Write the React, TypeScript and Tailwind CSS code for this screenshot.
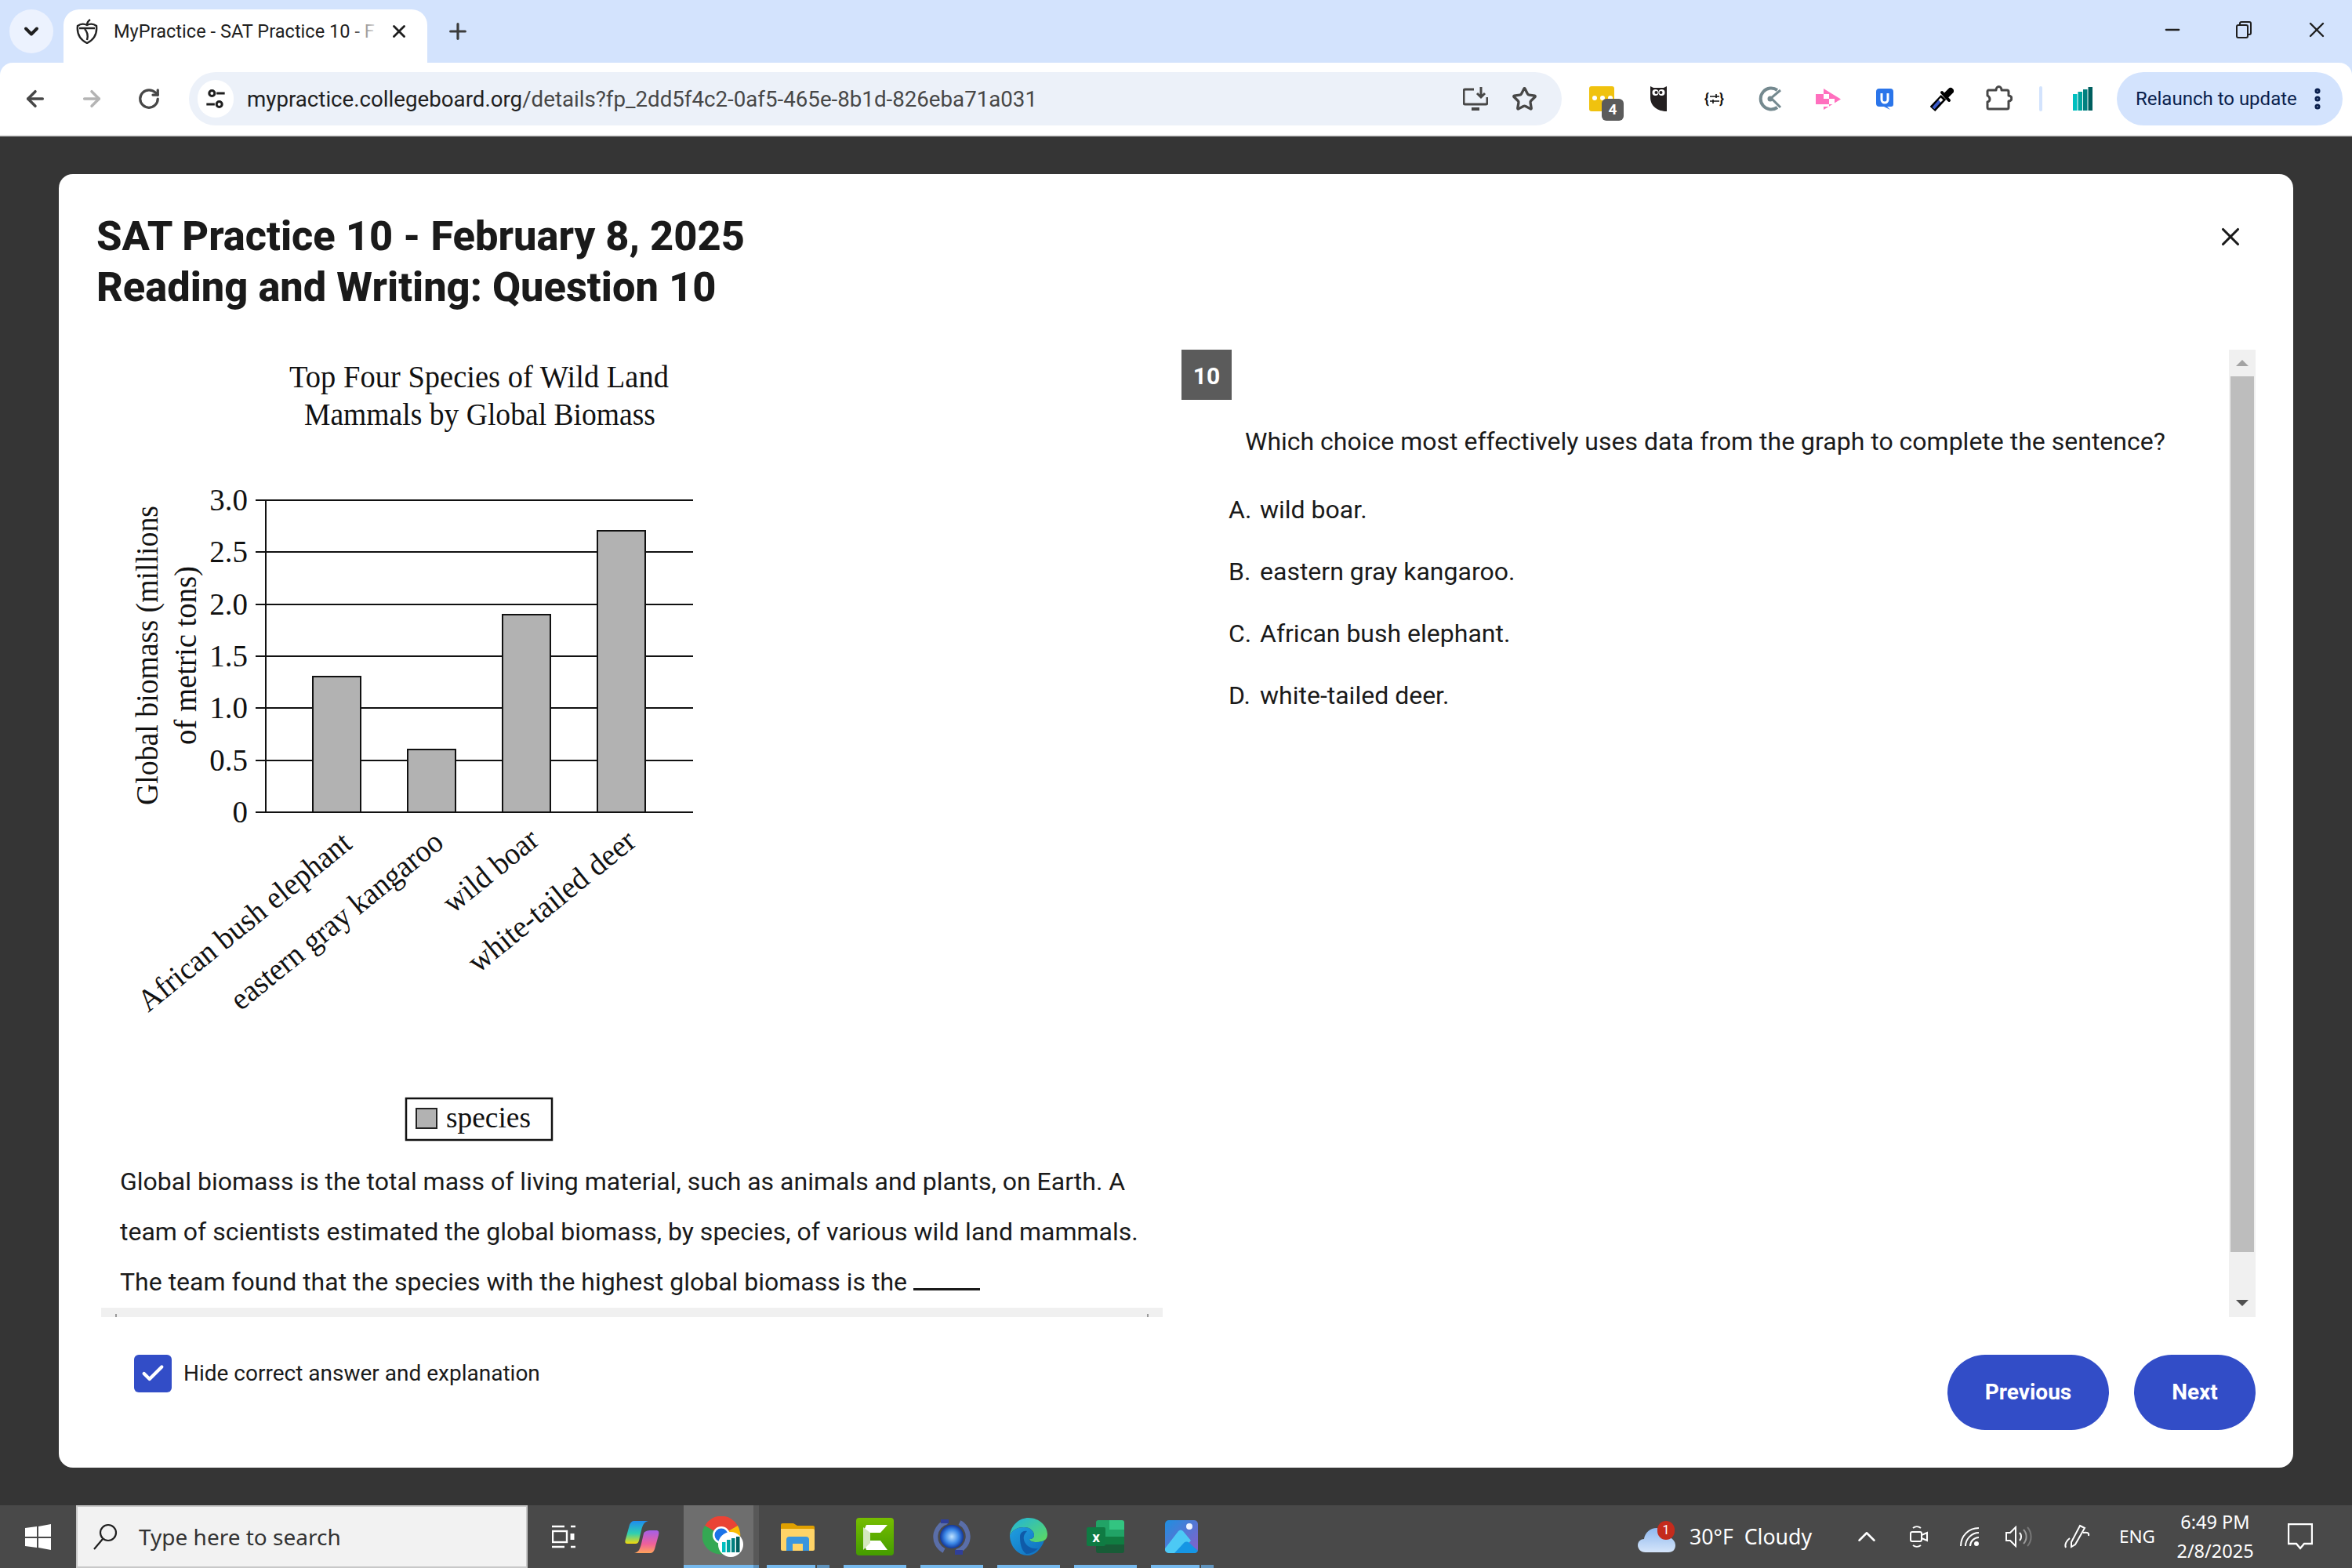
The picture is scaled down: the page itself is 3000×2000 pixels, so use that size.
import { ArrowLeft, ArrowRight, Check, ChevronDown, ChevronUp, EllipsisVertical, Minus, Plus, RotateCw, Star, X } from "lucide-react";

const ui = "font-['Noto_Sans',sans-serif]";
const serif = "'Liberation Serif', serif";

const ticks = [
    { label: "3.0", y: 638 },
    { label: "2.5", y: 704 },
    { label: "2.0", y: 771 },
    { label: "1.5", y: 837 },
    { label: "1.0", y: 903 },
    { label: "0.5", y: 970 },
    { label: "0", y: 1036 },
];

const bars = [
    { x: 399, top: 863 },
    { x: 520, top: 956 },
    { x: 641, top: 784 },
    { x: 762, top: 677 },
];

const barLabels = [
    { text: "African bush elephant", x: 189, y: 1292, len: 337 },
    { text: "eastern gray kangaroo", x: 307, y: 1290, len: 336 },
    { text: "wild boar", x: 578, y: 1166, len: 144 },
    { text: "white-tailed deer", x: 610, y: 1242, len: 262 },
];

const options = [
    { letter: "A.", text: "wild boar." },
    { letter: "B.", text: "eastern gray kangaroo." },
    { letter: "C.", text: "African bush elephant." },
    { letter: "D.", text: "white-tailed deer." },
];

const Chart = () => (
    <svg viewBox="129 446 800 1029" className="w-[800px] h-[1029px] shrink-0" fontFamily={serif} fill="#111">
        <text x="369" y="494" fontSize="39" textLength="484" lengthAdjust="spacingAndGlyphs">Top Four Species of Wild Land</text>
        <text x="388" y="542" fontSize="39" textLength="448" lengthAdjust="spacingAndGlyphs">Mammals by Global Biomass</text>
        {ticks.map((t) => (
            <g key={t.label}>
                <line x1="326" x2="884" y1={t.y} y2={t.y} stroke="#111" strokeWidth="2" />
                <text x="316" y={t.y + 13} fontSize="39" textAnchor="end">{t.label}</text>
            </g>
        ))}
        <line x1="339" x2="339" y1="638" y2="1036" stroke="#111" strokeWidth="2" />
        {bars.map((b) => (
            <rect key={b.x} x={b.x} y={b.top} width="61" height={1036 - b.top} fill="#b2b2b2" stroke="#111" strokeWidth="2" />
        ))}
        <text transform="translate(201 1027) rotate(-90)" fontSize="39" textLength="382" lengthAdjust="spacingAndGlyphs">Global biomass (millions</text>
        <text transform="translate(250 950) rotate(-90)" fontSize="39" textLength="228" lengthAdjust="spacingAndGlyphs">of metric tons)</text>
        {barLabels.map((l) => (
            <text key={l.text} transform={`translate(${l.x} ${l.y}) rotate(-39)`} fontSize="40" textLength={l.len} lengthAdjust="spacingAndGlyphs">{l.text}</text>
        ))}
        <rect x="518" y="1401" width="186" height="53" fill="#fff" stroke="#111" strokeWidth="2.5" />
        <rect x="531" y="1414" width="26" height="25" fill="#b2b2b2" stroke="#222" strokeWidth="2" />
        <text x="569" y="1438" fontSize="37" textLength="108" lengthAdjust="spacingAndGlyphs">species</text>
    </svg>
);

const TabStrip = () => (
    <div className="h-[80px] flex items-start pt-[12px] relative">
        <div className="ml-[12px] w-[56px] h-[56px] rounded-full bg-[#ecf2fe] flex items-center justify-center">
            <ChevronDown size={28} strokeWidth={3.4} color="#1f1f1f" />
        </div>
        <div className="ml-[13px] w-[464px] h-[68px] bg-white rounded-t-[20px] flex items-center relative pb-[12px]">
            <svg viewBox="0 0 30 32" className="ml-[15px] w-[30px] h-[32px]" fill="none" stroke="#222" strokeWidth="2.4">
                <path d="M3 9c4-3 8-3 12-1 4-2 8-2 12 1 1 9-2 17-12 22C5 26 2 18 3 9z" />
                <path d="M5 12h20M15 8c0-3 1-5 4-7" />
                <path d="M12 13c3 3 5 7 3 14" />
            </svg>
            <span className="ml-[19px] w-[351px] overflow-hidden whitespace-nowrap text-[23.6px] text-[#1f1f1f] font-['Roboto',sans-serif] leading-[28px]">MyPractice - SAT Practice 10 - F</span>
            <div className="absolute left-[365px] top-0 w-[38px] h-[56px] bg-gradient-to-r from-transparent to-white" />
            <X size={26} strokeWidth={2.6} color="#1f1f1f" />
        </div>
        <Plus size={32} strokeWidth={2.4} color="#3c3c3c" className="ml-[23px] mt-[12px]" />
        <div className="ml-auto flex items-center mt-[10px]">
            <Minus size={28} strokeWidth={2} color="#1f1f1f" className="mr-[67px]" />
            <svg viewBox="0 0 20 22" className="w-[20px] h-[22px] mr-[67px]" fill="none" stroke="#1f1f1f" strokeWidth="2">
                <rect x="1" y="5" width="14" height="16" rx="2" />
                <path d="M5 5V3a2 2 0 0 1 2-2h10a2 2 0 0 1 2 2v12a2 2 0 0 1-2 2h-2" />
            </svg>
            <X size={32} strokeWidth={1.8} color="#1f1f1f" className="mr-[29px]" />
        </div>
    </div>
);

const Toolbar = () => (
    <div className="h-[92px] bg-white rounded-t-[16px] flex items-center pl-[29px] relative">
        <ArrowLeft size={32} strokeWidth={2.6} color="#474747" />
        <ArrowRight size={32} strokeWidth={2.6} color="#b4b4b4" className="ml-[40px]" />
        <RotateCw size={30} strokeWidth={2.6} color="#474747" className="ml-[42px]" />
        <div className="ml-[36px] w-[1751px] h-[68px] rounded-full bg-[#ecf1f9] flex items-center pl-[11px]">
            <div className="w-[46px] h-[48px] rounded-full bg-white flex items-center justify-center">
                <svg viewBox="0 0 24 24" className="w-[28px] h-[28px]" fill="none" stroke="#1f1f1f" strokeWidth="2.6">
                    <circle cx="8" cy="6" r="3" />
                    <path d="M13 6h9M2 18h9" />
                    <circle cx="16" cy="18" r="3" />
                </svg>
            </div>
            <span className="ml-[17px] pt-[2px] text-[27.7px] text-[#1f1f1f] font-['Roboto',sans-serif] whitespace-nowrap">mypractice.collegeboard.org<span className="text-[#474747]">/details?fp_2dd5f4c2-0af5-465e-8b1d-826eba71a031</span></span>
            <svg viewBox="0 0 32 30" className="ml-auto w-[32px] h-[30px]" fill="none" stroke="#474747" strokeWidth="3">
                <path d="M14 3H3a2 2 0 0 0-2 2v15a2 2 0 0 0 2 2h26a2 2 0 0 0 2-2v-7" />
                <path d="M23 0v12M18 8l5 5 5-5" />
                <path d="M11 28h10" strokeWidth="4" />
            </svg>
            <Star size={33} strokeWidth={2.4} color="#474747" className="ml-[30px] mr-[31px]" />
        </div>
        <div className="ml-[35px] relative w-[32px] h-[32px] bg-[#f0c20e] rounded-[3px]">
            <div className="absolute left-[4px] top-[12px] flex gap-[4px]">
                <div className="w-[6px] h-[6px] rounded-full bg-white" />
                <div className="w-[6px] h-[6px] rounded-full bg-white" />
                <div className="w-[6px] h-[6px] rounded-full bg-white" />
            </div>
            <div className="absolute left-[16px] top-[16px] w-[28px] h-[28px] rounded-[6px] bg-[#5b5b5b] text-white text-[19px] font-bold font-['Roboto',sans-serif] flex items-center justify-center">4</div>
        </div>
        <svg viewBox="0 0 21 32" className="ml-[46px] w-[21px] h-[32px]">
            <path d="M0 0l4 2h13l4-2v32C10 32 0 26 0 14z" fill="#231f20" />
            <circle cx="6.5" cy="8" r="4" fill="#fff" />
            <circle cx="14.5" cy="8" r="4" fill="#fff" />
            <circle cx="7.5" cy="8" r="2" fill="#231f20" />
            <circle cx="13.5" cy="8" r="2" fill="#231f20" />
        </svg>
        <div className="ml-[48px] w-[25px] flex items-center justify-between text-[#111] text-[18px] font-bold font-['Roboto',sans-serif] leading-none">
            <span>{"{"}</span>
            <svg viewBox="0 0 12 12" className="w-[12px] h-[12px]" stroke="#111" strokeWidth="1.6">
                <path d="M0 3h12M0 9h12M8 0v5M4 7v5" />
            </svg>
            <span>{"}"}</span>
        </div>
        <svg viewBox="0 0 30 32" className="ml-[44px] w-[30px] h-[32px]" fill="none" stroke="#74898f" strokeWidth="4">
            <path d="M24 5A13.500 13.500 0 1 0 24 27" />
            <path d="M28 5L16 15 28 27" strokeWidth="3" />
            <circle cx="15" cy="16" r="1.500" fill="#74898f" />
        </svg>
        <svg viewBox="0 0 32 27" className="ml-[43px] w-[32px] h-[27px]">
            <path d="M10 0l22 13.500L10 27z" fill="#ff6fbe" />
            <rect x="0" y="7" width="10" height="13" fill="#ff6fbe" />
            <path d="M10 7h7v6h-7zM17 13h7v7h-7zM10 20h7v3h-7z" fill="#fff" />
        </svg>
        <svg viewBox="0 0 22 27" className="ml-[45px] w-[22px] h-[27px]">
            <path d="M4 0h14a4 4 0 0 1 4 4v16a3 3 0 0 1-3 3h-5l4 4-8-4H4a4 4 0 0 1-4-4V4a4 4 0 0 1 4-4z" fill="#2b75ea" />
            <path d="M7 6v8a4 4 0 0 0 8 0V6" fill="none" stroke="#fff" strokeWidth="3" />
        </svg>
        <svg viewBox="0 0 30 32" className="ml-[47px] w-[30px] h-[32px]" fill="none">
            <path d="M3 29L17 14" stroke="#000" strokeWidth="9" />
            <path d="M4 28L12 19" stroke="#3b5bc9" strokeWidth="4" />
            <path d="M12 19l3-3" stroke="#fff" strokeWidth="4" />
            <path d="M15 8l9 10" stroke="#000" strokeWidth="4" strokeLinecap="round" />
            <path d="M21 11l5-5" stroke="#000" strokeWidth="8" strokeLinecap="round" />
        </svg>
        <svg viewBox="0 0 34 33" className="ml-[41px] mb-[3px] w-[34px] h-[33px]" fill="none" stroke="#474747" strokeWidth="3" strokeLinejoin="round">
            <path d="M3 7h10c0-6 7-6 7 0h7a2 2 0 0 1 2 2v5c5 0 5 7 0 7v8a2 2 0 0 1-2 2H4a2 2 0 0 1-2-2v-7c4-1 4-6 0-8V9a2 2 0 0 1 1-2z" />
        </svg>
        <div className="ml-[34px] w-[4px] h-[32px] rounded-full bg-[#d3e3fd]" />
        <svg viewBox="0 0 25 30" className="ml-[39px] w-[25px] h-[30px]">
            <rect x="0" y="9" width="5.500" height="21" fill="#00c0c0" />
            <rect x="6.500" y="6" width="5.500" height="24" fill="#00a39f" />
            <rect x="13" y="3" width="5.500" height="27" fill="#008080" />
            <rect x="19.500" y="0" width="5.500" height="30" fill="#005f5f" />
        </svg>
        <div className="ml-[31px] w-[288px] h-[68px] rounded-full bg-[#d3e3fd] flex items-center pl-[24px]">
            <span className="text-[24px] text-[#0a1f4d] font-['Roboto',sans-serif] whitespace-nowrap">Relaunch to update</span>
            <EllipsisVertical size={34} strokeWidth={3} color="#0a1f4d" className="ml-[9px]" />
        </div>
    </div>
);

const Modal = () => (
    <div className="w-[2850px] h-[1650px] bg-white rounded-[18px] flex flex-col relative">
        <h1 className="pl-[48px] pt-[47px] h-[176px] text-[52.4px] leading-[65px] font-extrabold text-[#1a1a1a] font-['Roboto',sans-serif]">
            SAT Practice 10 - February 8, 2025<br />Reading and Writing: Question 10
        </h1>
        <X size={38} strokeWidth={2} color="#1a1a1a" className="absolute left-[2751px] top-[61px]" />
        <div className="mt-[48px] pl-[54px] pr-[48px] h-[1234px] flex font-['Roboto',sans-serif] text-[#1a1a1a]">
            <div className="w-[1354px] h-full flex flex-col">
                <div className="flex-1 overflow-hidden">
                    <Chart />
                    <p className="pl-[24px] text-[32px] leading-[64px] whitespace-nowrap">
                        Global biomass is the total mass of living material, such as animals and plants, on Earth. A<br />
                        team of scientists estimated the global biomass, by species, of various wild land mammals.<br />
                        The team found that the species with the highest global biomass is the <span className="inline-block w-[85px] border-b-[3px] border-[#1a1a1a]" />
                    </p>
                </div>
                <div className="h-[12px] bg-[#f0f0f0] flex items-end justify-between px-[18px]">
                    <div className="w-[2px] h-[4px] bg-[#9a9a9a]" />
                    <div className="w-[2px] h-[4px] bg-[#9a9a9a]" />
                </div>
            </div>
            <div className="ml-[24px] flex-1 flex justify-between">
                <div>
                    <div className="w-[64px] h-[64px] pt-[3px] bg-[#5b5b5b] text-white text-[30px] font-bold flex items-center justify-center">10</div>
                    <p className="mt-[29px] ml-[81px] text-[32px] leading-[48px] whitespace-nowrap">Which choice most effectively uses data from the graph to complete the sentence?</p>
                    <ul className="mt-[39px] ml-[60px] flex flex-col gap-[31px] text-[32px] leading-[48px]">
                        {options.map((o) => (
                            <li key={o.letter} className="flex">
                                <span className="w-[40px]">{o.letter}</span>
                                <span>{o.text}</span>
                            </li>
                        ))}
                    </ul>
                </div>
                <div className="w-[34px] h-full bg-[#f0f0f0] flex flex-col items-center">
                    <div className="h-[34px] flex items-center">
                        <div className="w-0 h-0 border-x-[8px] border-x-transparent border-b-[8px] border-b-[#a3a3a3]" />
                    </div>
                    <div className="w-[30px] h-[1117px] bg-[#bdbdbd]" />
                    <div className="flex-1 flex items-end pb-[14px]">
                        <div className="w-0 h-0 border-x-[8px] border-x-transparent border-t-[8px] border-t-[#505050]" />
                    </div>
                </div>
            </div>
        </div>
        <div className="pt-[48px] pl-[96px] pr-[48px] flex items-start justify-between font-['Roboto',sans-serif]">
            <label className="flex items-center text-[#1a1a1a] text-[28px]">
                <span className="w-[48px] h-[48px] rounded-[6px] bg-[#324dc7] flex items-center justify-center">
                    <Check size={34} strokeWidth={3} color="#fff" />
                </span>
                <span className="ml-[15px]">Hide correct answer and explanation</span>
            </label>
            <div className="flex gap-[32px]">
                <button className="w-[206px] h-[96px] rounded-full bg-[#324dc7] text-white text-[28px] font-bold">Previous</button>
                <button className="w-[155px] h-[96px] rounded-full bg-[#324dc7] text-white text-[28px] font-bold">Next</button>
            </div>
        </div>
    </div>
);

const Tile = ({ children, dim = false }: { children: React.ReactNode; dim?: boolean }) => (
    <div className="w-[80px] h-full flex items-center justify-center relative">
        {children}
        <div className={dim ? "absolute left-0 bottom-0 w-[62px] h-[4px] bg-[#76b9ed]" : "absolute left-0 bottom-0 w-full h-[4px] bg-[#76b9ed]"} />
        {dim && <div className="absolute left-[64px] bottom-0 w-[16px] h-[4px] bg-[#5f93bd]" />}
    </div>
);

const Taskbar = () => (
    <div className={`h-[80px] bg-[#494949] flex items-stretch ${ui}`}>
        <div className="w-[97px] flex items-center justify-center">
            <svg viewBox="0 0 33 33" className="w-[33px] h-[33px]" fill="#fff">
                <path d="M0 5l15-2v13H0zM17 3l16-3v16H17zM0 18h15v12L0 28zM17 18h16v15l-16-3z" />
            </svg>
        </div>
        <div className="w-[576px] bg-[#f2f2f2] border-y-2 border-x-2 border-[#c8c8c8] flex items-center pl-[19px]">
            <svg viewBox="0 0 32 34" className="w-[32px] h-[34px]" fill="none" stroke="#1f1f1f" strokeWidth="2.2">
                <circle cx="20" cy="12" r="10" />
                <path d="M13 20L2 33" />
            </svg>
            <span className="ml-[27px] text-[28px] text-[#333] whitespace-nowrap">Type here to search</span>
        </div>
        <div className="w-[92px] flex items-center justify-center">
            <svg viewBox="0 0 30 30" className="w-[30px] h-[30px]" fill="none" stroke="#fff" strokeWidth="2.4">
                <path d="M0 2h16M0 28h16M24 2h6M24 28h6" />
                <rect x="1" y="8" width="18" height="14" />
                <path d="M26 11v8" strokeWidth="5" />
            </svg>
        </div>
        <div className="w-[107px] flex items-center justify-center">
            <svg viewBox="0 0 44 41" className="w-[44px] h-[41px]">
                <defs>
                    <linearGradient id="copA" x1="0" y1="0" x2="0" y2="1">
                        <stop offset="0" stopColor="#1e8cf0" />
                        <stop offset="0.55" stopColor="#2fd0b0" />
                        <stop offset="1" stopColor="#f5d90a" />
                    </linearGradient>
                    <linearGradient id="copB" x1="0" y1="0" x2="0" y2="1">
                        <stop offset="0" stopColor="#a45fe8" />
                        <stop offset="0.6" stopColor="#f0609a" />
                        <stop offset="1" stopColor="#ffa45a" />
                    </linearGradient>
                </defs>
                <path d="M12 0h18c-5 1-7 4-9 12l-3 13c-1 4-3 4-6 4H3c-3 0-3-3-2-6l5-18C7 2 9 0 12 0z" fill="url(#copA)" />
                <path d="M33 12h7c3 0 4 2 3 6l-5 18c-1 3-3 5-6 5H12c5-1 7-4 9-12l3-13c1-3 5-4 9-4z" fill="url(#copB)" />
            </svg>
        </div>
        <div className="w-[96px] relative flex items-center">
            <div className="absolute left-0 top-0 bottom-0 w-[89px] bg-[#6e6e6e]" />
            <div className="absolute left-[89px] top-0 bottom-0 w-[7px] bg-[#585858]" />
            <div className="absolute left-0 bottom-0 w-[89px] h-[4px] bg-[#76b9ed]" />
            <div className="absolute left-[89px] bottom-0 w-[7px] h-[4px] bg-[#5f93bd]" />
            <svg viewBox="0 0 52 52" className="relative ml-[24px] w-[52px] h-[52px]">
                <path d="M24 24L3 12A24 24 0 0 1 45 12z" fill="#ea4335" />
                <path d="M24 24L45 12A24 24 0 0 1 36 45z" fill="#fbbc04" />
                <path d="M24 24L36 45A24 24 0 0 1 3 12z" fill="#34a853" />
                <circle cx="24" cy="24" r="11" fill="#fff" />
                <circle cx="24" cy="24" r="8.500" fill="#1a73e8" />
                <circle cx="36" cy="36" r="16" fill="#fff" />
                <rect x="25" y="33" width="4.500" height="13" fill="#00c0c0" />
                <rect x="31" y="30" width="4.500" height="16" fill="#00a39f" />
                <rect x="37" y="28" width="4.500" height="18" fill="#008080" />
                <rect x="43" y="26" width="4.500" height="20" fill="#005f5f" />
            </svg>
        </div>
        <div className="ml-[10px] flex gap-[18px]">
            <Tile dim>
                <svg viewBox="0 0 43 35" className="w-[43px] h-[35px] ml-[-2px]">
                    <path d="M0 2a2 2 0 0 1 2-2h14l5 3h20a2 2 0 0 1 2 2v5H0z" fill="#e0a000" />
                    <path d="M0 7h41a2 2 0 0 1 2 2v24a2 2 0 0 1-2 2H2a2 2 0 0 1-2-2z" fill="#ffd467" />
                    <path d="M7 35V21a4 4 0 0 1 4-4h21a4 4 0 0 1 4 4v14h-8v-9H15v9z" fill="#3a96dd" />
                </svg>
            </Tile>
            <Tile>
                <svg viewBox="0 0 48 48" className="w-[48px] h-[48px]">
                    <defs>
                        <linearGradient id="camG" x1="0" y1="0" x2="0" y2="1">
                            <stop offset="0" stopColor="#76bd00" />
                            <stop offset="1" stopColor="#449c00" />
                        </linearGradient>
                    </defs>
                    <rect width="48" height="48" rx="4" fill="url(#camG)" />
                    <path d="M13 9h27l-9 10H18v10h13l9 12H13L9 30V18z" fill="#fff" />
                    <path d="M9 12l9 7v13l-9 9z" fill="#d5e8c0" />
                </svg>
            </Tile>
            <Tile>
                <svg viewBox="0 0 48 48" className="w-[48px] h-[48px]" fill="none">
                    <defs>
                        <radialGradient id="globeG">
                            <stop offset="0" stopColor="#bfe3ff" />
                            <stop offset="0.6" stopColor="#3b87e6" />
                            <stop offset="1" stopColor="#12379c" />
                        </radialGradient>
                    </defs>
                    <path d="M18 5A20 20 0 0 0 14 42" stroke="#5a6ea8" strokeWidth="6" />
                    <path d="M30 43A20 20 0 0 0 34 6" stroke="#5a6ea8" strokeWidth="6" />
                    <path d="M10 2h10v5H10zM28 41h10v6H28z" fill="#2f3f9a" />
                    <circle cx="24" cy="24" r="15" fill="url(#globeG)" />
                </svg>
            </Tile>
            <Tile>
                <svg viewBox="0 0 48 48" className="w-[48px] h-[48px]">
                    <defs>
                        <linearGradient id="edgeT" x1="0" y1="0" x2="1" y2="1">
                            <stop offset="0" stopColor="#1fb2e0" />
                            <stop offset="1" stopColor="#5fdc5c" />
                        </linearGradient>
                        <linearGradient id="edgeB" x1="0" y1="0" x2="1" y2="1">
                            <stop offset="0" stopColor="#1f9fe0" />
                            <stop offset="1" stopColor="#0f6cbd" />
                        </linearGradient>
                    </defs>
                    <path d="M0 22C2 9 12 0 24 0c14 0 24 11 24 21 0 8-7 10-14 10-5 0-8-1-9-4 4 0 6-2 6-5 0-5-5-10-13-10S4 15 0 22z" fill="url(#edgeT)" />
                    <path d="M0 22C4 15 10 12 18 12c8 0 13 5 13 10 0 3-2 5-6 5 1 3 4 4 9 4 4 0 7-1 10-2-4 11-12 19-21 19C10 48 0 36 0 22z" fill="url(#edgeB)" />
                    <path d="M13 24c0-5 4-8 9-7-3 3-6 7-3 14 3 6 10 9 17 8-4 4-9 7-15 7-7-5-8-15-8-22z" fill="#0f5aa8" />
                </svg>
            </Tile>
            <Tile>
                <svg viewBox="0 0 48 42" className="w-[48px] h-[42px]">
                    <path d="M12 3a3 3 0 0 1 3-3h14v21H12z" fill="#21a366" />
                    <path d="M29 0h16a3 3 0 0 1 3 3v9H29z" fill="#33c481" />
                    <path d="M29 12h19v10H29z" fill="#21a366" />
                    <path d="M12 21h36v10H12z" fill="#107c41" />
                    <path d="M12 31h36v8a3 3 0 0 1-3 3H15a3 3 0 0 1-3-3z" fill="#185c37" />
                    <rect y="9" width="24" height="24" rx="2" fill="#0f7b43" />
                    <text x="12" y="28" textAnchor="middle" fontFamily="'Roboto', sans-serif" fontWeight="700" fontSize="19" fill="#fff">x</text>
                </svg>
            </Tile>
            <Tile dim>
                <svg viewBox="0 0 42 42" className="w-[42px] h-[42px] ml-[-2px]">
                    <defs>
                        <linearGradient id="phoG" x1="0" y1="0" x2="1" y2="1">
                            <stop offset="0" stopColor="#1e8fe0" />
                            <stop offset="1" stopColor="#8a5ec8" />
                        </linearGradient>
                    </defs>
                    <rect width="42" height="42" rx="5" fill="url(#phoG)" />
                    <circle cx="31" cy="8" r="4" fill="#eef4ff" />
                    <path d="M0 36l17-22c2-2 4-2 6 0l10 12-14 16H5a5 5 0 0 1-5-6z" fill="#4cc9f5" />
                    <path d="M12 42l12-13c2-2 5-2 7 0l11 10a5 5 0 0 1-5 3z" fill="#1596e4" />
                </svg>
            </Tile>
        </div>
        <div className="ml-auto flex items-center text-white">
            <div className="relative w-[48px] h-[32px] mt-[8px]">
                <svg viewBox="0 0 48 32" className="w-[48px] h-[32px]">
                    <defs>
                        <linearGradient id="cloudG" x1="0" y1="0" x2="0" y2="1">
                            <stop offset="0" stopColor="#8fb8ee" />
                            <stop offset="1" stopColor="#d5e5fa" />
                        </linearGradient>
                    </defs>
                    <path d="M10 32C3 32 0 27 0 23c0-5 4-8 8-8 1-8 8-14 16-14 7 0 13 5 14 12 6 0 10 5 10 10s-3 9-9 9z" fill="url(#cloudG)" />
                </svg>
                <div className="absolute left-[25px] top-[-8px] w-[22px] h-[24px] rounded-full bg-[#c42b1c] text-white text-[16px] flex items-center justify-center font-['Roboto',sans-serif]">1</div>
            </div>
            <span className="ml-[18px] w-[157px] text-[26.7px] whitespace-pre">30°F  Cloudy</span>
            <ChevronUp size={38} strokeWidth={1.6} color="#fff" className="ml-[50px]" />
            <svg viewBox="0 0 24 30" className="ml-[35px] w-[24px] h-[30px]" fill="none" stroke="#fff" strokeWidth="2">
                <path d="M5 4a8 8 0 0 1 10 0M5 26a8 8 0 0 0 10 0" />
                <rect x="2" y="9" width="14" height="12" rx="2" />
                <path d="M16 13l7-3v10l-7-3" />
            </svg>
            <svg viewBox="0 0 26 24" className="ml-[41px] w-[26px] h-[24px]" fill="none" stroke="#fff" strokeWidth="2">
                <path d="M1 24C1 11 11 1 24 1" />
                <path d="M7 24c0-9 8-17 17-17" />
                <path d="M13 24c0-6 5-11 11-11" />
                <circle cx="21" cy="21" r="3" fill="#fff" stroke="none" />
            </svg>
            <svg viewBox="0 0 34 28" className="ml-[32px] w-[34px] h-[28px]" fill="none" stroke="#fff" strokeWidth="2">
                <path d="M1 9h5l7-7v24l-7-7H1z" />
                <path d="M18 9a7 7 0 0 1 0 10" />
                <path d="M23 5a13 13 0 0 1 0 18" stroke="#9a9a9a" />
                <path d="M28 2a18 18 0 0 1 0 24" stroke="#777" />
            </svg>
            <svg viewBox="0 0 35 32" className="ml-[40px] w-[35px] h-[32px]" fill="none" stroke="#fff" strokeWidth="2">
                <path d="M21 2l6 3-12 21-5 3v-6z" />
                <path d="M25 11c5-1 8 0 7 4M8 18c-4 3-7 8-5 12" />
            </svg>
            <span className="ml-[36px] w-[45px] text-[22.5px]">ENG</span>
            <div className="ml-[30px] w-[95px] flex flex-col items-center text-[23.5px] leading-[37px]">
                <span>6:49 PM</span>
                <span>2/8/2025</span>
            </div>
            <svg viewBox="0 0 32 34" className="ml-[45px] mr-[50px] w-[32px] h-[34px]" fill="none" stroke="#fff" strokeWidth="2.4">
                <path d="M1 1h30v25H21l-5 6-5-6H1z" />
            </svg>
        </div>
    </div>
);

const App = () => (
    <div className="w-[3000px] h-[2000px] bg-[#d3e3fd] flex flex-col overflow-hidden">
        <TabStrip />
        <Toolbar />
        <div className="h-[2px] bg-[#e0e0e0]" />
        <main className="flex-1 bg-[#353535] pt-[48px] pl-[75px]">
            <Modal />
        </main>
        <Taskbar />
    </div>
);

export default App;
